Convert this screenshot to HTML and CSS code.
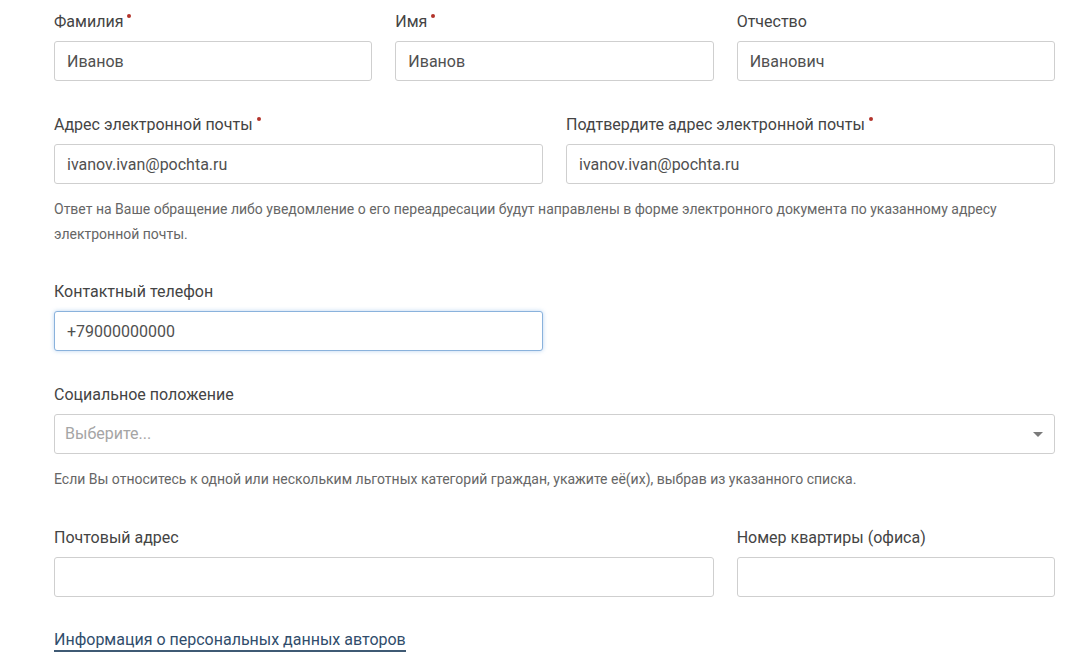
FILE: index.html
```html
<!DOCTYPE html>
<html lang="ru">
<head>
<meta charset="utf-8">
<title>Форма обращения</title>
<link rel="stylesheet" href="styles.css">
</head>
<body>
<form class="form">
  <div class="row row-3">
    <div class="field">
      <label class="label req">Фамилия</label>
      <div class="input">Иванов</div>
    </div>
    <div class="field">
      <label class="label req">Имя</label>
      <div class="input">Иванов</div>
    </div>
    <div class="field">
      <label class="label">Отчество</label>
      <div class="input">Иванович</div>
    </div>
  </div>

  <div class="group group-email">
    <div class="row row-2">
      <div class="field">
        <label class="label req">Адрес электронной почты</label>
        <div class="input">ivanov.ivan@pochta.ru</div>
      </div>
      <div class="field">
        <label class="label req">Подтвердите адрес электронной почты</label>
        <div class="input">ivanov.ivan@pochta.ru</div>
      </div>
    </div>
    <p class="hint">Ответ на Ваше обращение либо уведомление о его переадресации будут направлены в форме электронного документа по указанному адресу электронной почты.</p>
  </div>

  <div class="row row-2">
    <div class="field">
      <label class="label">Контактный телефон</label>
      <div class="input focus">+79000000000</div>
    </div>
  </div>

  <div class="group group-social">
    <div class="field">
      <label class="label">Социальное положение</label>
      <div class="input select"><span class="placeholder">Выберите...</span><span class="caret"></span></div>
    </div>
    <p class="hint">Если Вы относитесь к одной или нескольким льготных категорий граждан, укажите её(их), выбрав из указанного списка.</p>
  </div>

  <div class="row row-3 row-last">
    <div class="field span-2">
      <label class="label">Почтовый адрес</label>
      <div class="input"></div>
    </div>
    <div class="field">
      <label class="label">Номер квартиры (офиса)</label>
      <div class="input"></div>
    </div>
  </div>

  <a class="link" href="#">Информация о персональных данных авторов</a>
</form>
</body>
</html>
```

FILE: styles.css
```css
html, body {
  margin: 0;
  padding: 0;
  background: #ffffff;
}

body {
  font-family: Roboto, "Noto Sans", "Liberation Sans", sans-serif;
  color: #444444;
}

.form {
  width: 1001px;
  margin-left: 54px;
  padding-top: 11px;
}

.row {
  display: grid;
  column-gap: 23px;
  margin-bottom: 33px;
}

.row-3 {
  grid-template-columns: 1fr 1fr 1fr;
}

.row-2 {
  grid-template-columns: 1fr 1fr;
}

.span-2 {
  grid-column: span 2;
}

.group-email {
  margin-bottom: 34px;
}

.group-social {
  margin-bottom: 35px;
}

.group .row {
  margin-bottom: 0;
}

.row-last {
  margin-bottom: 33px;
}

.label {
  display: block;
  font-size: 16px;
  line-height: 21px;
  height: 21px;
  margin-bottom: 9px;
  color: #444444;
}

.req::after {
  content: "";
  display: inline-block;
  width: 4px;
  height: 4px;
  border-radius: 50%;
  background: #b3332b;
  margin-left: 4px;
  vertical-align: top;
  position: relative;
  top: 3px;
}

.input {
  box-sizing: border-box;
  height: 40px;
  border: 1px solid #cfcfcf;
  border-radius: 3px;
  padding: 0 12px;
  font-size: 16px;
  line-height: 40px;
  color: #505050;
  background: #fff;
  overflow: hidden;
}

.input.focus {
  border-color: #8ab2dc;
  box-shadow: 0 0 4px rgba(102, 160, 225, 0.45);
}

.select {
  display: flex;
  align-items: center;
  justify-content: space-between;
  padding: 0 10px 0 10px;
}

.placeholder {
  color: #a5a5a5;
}

.caret {
  width: 0;
  height: 0;
  border-left: 5px solid transparent;
  border-right: 5px solid transparent;
  border-top: 5px solid #7a7a7a;
  margin-right: 1px;
}

.hint {
  margin: 13px 0 0;
  font-size: 14px;
  line-height: 25px;
  color: #666666;
}

.link {
  display: inline-block;
  font-size: 16px;
  line-height: 20px;
  color: #304d6c;
  text-decoration: none;
  border-bottom: 2px solid #3f5a74;
}
```
